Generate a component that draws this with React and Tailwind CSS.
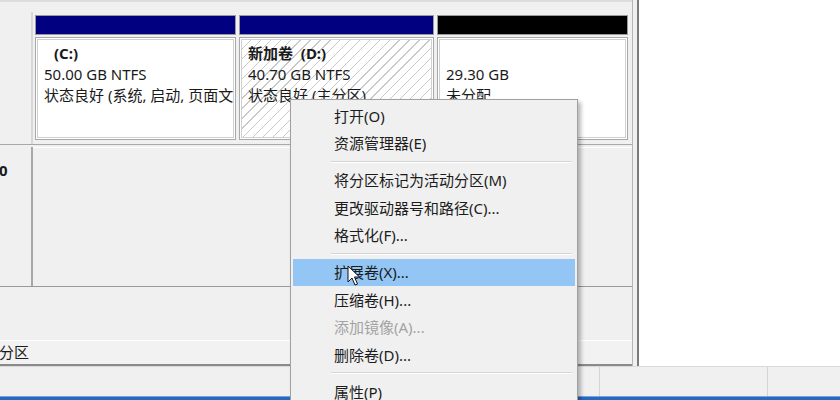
import React from 'react';

const font = 'font-["Noto_Sans","Noto_Sans_CJK_SC",sans-serif]';

const menuItems = [
  { label: '打开(O)' },
  { label: '资源管理器(E)' },
  { sep: true },
  { label: '将分区标记为活动分区(M)' },
  { label: '更改驱动器号和路径(C)...' },
  { label: '格式化(F)...' },
  { sep: true },
  { label: '扩展卷(X)...', active: true },
  { label: '压缩卷(H)...' },
  { label: '添加镜像(A)...', disabled: true },
  { label: '删除卷(D)...' },
  { sep: true },
  { label: '属性(P)' },
];

function Partition({ bar, hatched, width, children }) {
  return (
    <div className={`flex flex-col ${width}`}>
      <div className={`h-[20px] ${bar} border border-[#9a9a9a]`} />
      <div className="mt-[2px] h-[103px] border border-[#a8a8a8] bg-white p-[1px]">
        <div
          className={`h-full overflow-hidden whitespace-nowrap border border-[#d0d0d0] px-[6px] pt-[3px] text-[15px] leading-[21px] text-[#1a1a1a] ${
            hatched
              ? 'bg-[repeating-linear-gradient(135deg,#ffffff_0px,#ffffff_6px,#c9c9c9_6px,#c9c9c9_7px)]'
              : 'bg-white'
          }`}
        >
          {children}
        </div>
      </div>
    </div>
  );
}

function ContextMenu() {
  return (
    <div className="absolute left-[290px] top-[99px] w-[288px] h-[310px] border border-[#a0a0a0] bg-[#f0f0f0] pt-[2px] px-[2px] shadow-[3px_3px_4px_rgba(0,0,0,0.28)]">
      {menuItems.map((it, i) =>
        it.sep ? (
          <div key={i} className="flex h-[9.5px] items-center pl-[38px] pr-[3px]">
            <div className="h-[2px] w-full border-t border-[#d5d5d5] border-b border-b-white" />
          </div>
        ) : (
          <div
            key={i}
            className={`flex h-[27.5px] items-center pl-[41px] text-[15px] ${
              it.active ? 'bg-[#93c6f4]' : ''
            } ${it.disabled ? 'text-[#a3a3a3]' : 'text-[#1c1c1c]'}`}
          >
            {it.label}
          </div>
        )
      )}
    </div>
  );
}

function Cursor() {
  return (
    <svg className="absolute left-[347px] top-[265px]" width="14" height="22" viewBox="0 0 14 22">
      <path
        d="M1 1 L1 17 L5 13 L8 20 L10.5 19 L7.5 12 L12.5 12 Z"
        fill="#ffffff"
        stroke="#111111"
        strokeWidth="1"
        strokeLinejoin="round"
      />
    </svg>
  );
}

export default function App() {
  return (
    <div className={`relative flex h-[400px] w-[840px] flex-col overflow-hidden bg-[#f0f0f0] ${font}`}>
      <div className="flex h-[366px]">
        {/* Disk view */}
        <div className="flex w-[633px] flex-col border-r border-[#b5b5b5]">
          <div className="h-[12px] border-t-2 border-[#dcdcdc]" />

          {/* Disk row 1 */}
          <div className="flex h-[133px] border-b border-[#a8a8a8]">
            <div className="w-[33px] border-r-2 border-[#d8d8d8]" />
            <div className="flex gap-[3px] pl-[2px] pt-[3px]">
              <Partition bar="bg-[#000080]" width="w-[201px]">
                <div className="pl-[10px] font-bold">(C:)</div>
                <div>50.00 GB NTFS</div>
                <div>状态良好 (系统, 启动, 页面文件, 活动, 故障转储, 主分区)</div>
              </Partition>
              <Partition bar="bg-[#000080]" width="w-[195px]" hatched>
                <div className="font-bold">新加卷&nbsp;&nbsp;(D:)</div>
                <div>40.70 GB NTFS</div>
                <div>状态良好 (主分区)</div>
              </Partition>
              <Partition bar="bg-black" width="w-[191px]">
                <div>&nbsp;</div>
                <div>29.30 GB</div>
                <div>未分配</div>
              </Partition>
            </div>
          </div>

          {/* Disk row 2 */}
          <div className="mt-[2px] flex h-[140px] border-b border-[#9a9a9a]">
            <div className="w-[33px] border-r-2 border-[#a8a8a8] pt-[12px] text-[15px] font-bold text-[#1a1a1a]">
              <div className="-ml-[1px]">0</div>
            </div>
            <div className="flex-1 border-t border-white bg-[#f0f0f0]" />
          </div>

          <div className="flex-1" />

          {/* Legend */}
          <div className="flex h-[26px] items-center overflow-hidden border-t border-white border-b-2 border-b-[#8a8a8a] bg-[#f2f2f2]">
            <div className="-ml-[1px] text-[15px] text-[#1a1a1a]">分区</div>
          </div>
        </div>

        <div className="w-[6px] border-r-2 border-[#7a7a7a]" />
        <div className="flex-1 bg-white" />
      </div>

      {/* Status bar */}
      <div className="flex h-[30px] border-t border-[#d9d9d9] bg-[#f0f0f0]">
        <div className="w-[600px] border-r border-[#d4d4d4]" />
        <div className="w-[168px] border-r border-[#d4d4d4]" />
        <div className="flex-1" />
      </div>
      <div className="h-[4px] border-t border-[#6fa6e0] bg-[#2a68bd]" />

      <ContextMenu />
      <Cursor />
    </div>
  );
}
